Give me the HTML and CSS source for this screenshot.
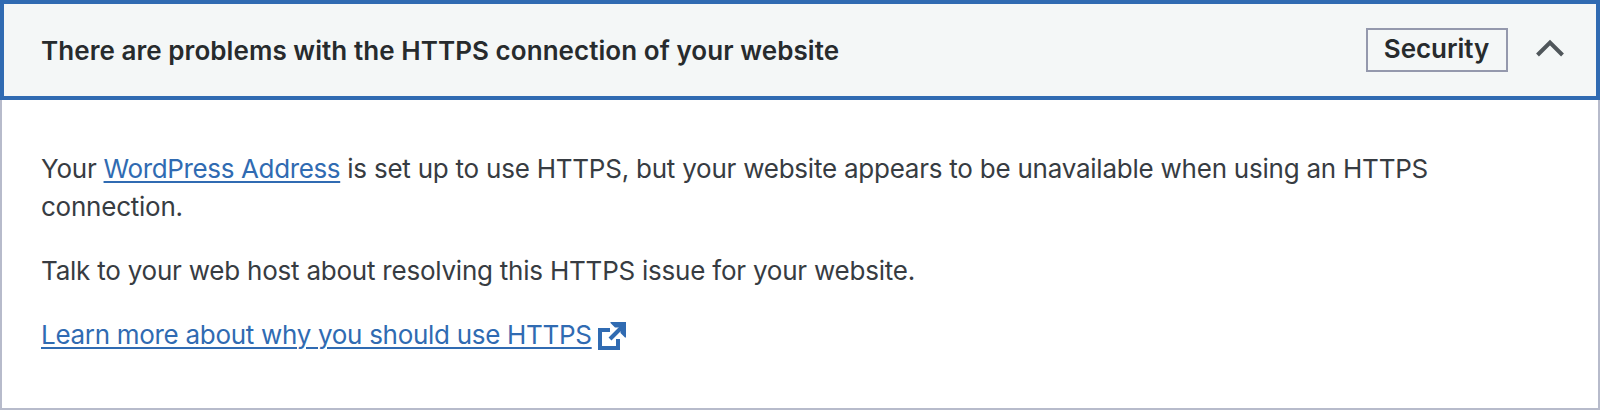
FILE: index.html
```html
<!DOCTYPE html>
<html lang="en">
<head>
<meta charset="utf-8">
<title>Site Health</title>
<link rel="stylesheet" href="styles.css">
</head>
<body>
<section class="accordion">
  <header class="trigger">
    <h4 class="title">There are problems with the HTTPS connection of your website</h4>
    <span class="badge">Security</span>
    <svg class="chevron" width="28" height="18" viewBox="0 0 28 18"><path d="M1.500 16 14 3.500 26.500 16"/></svg>
  </header>
  <div class="panel">
    <p class="intro">Your <a href="#">WordPress Address</a> is set up to use HTTPS, but your website appears to be unavailable when using an HTTPS<br>connection.</p>
    <p class="advice">Talk to your web host about resolving this HTTPS issue for your website.</p>
    <p class="more"><a href="#">Learn more about why you should use HTTPS</a><svg class="external" width="28" height="28" viewBox="0 0 28 28"><path class="frame" d="M12 8H2v18h18V17"/><path class="shaft" d="M12 17 24 5"/><path class="head" d="M12.500 0H28v15.500h-1L22.500 11V6.500L21.500 5.500H17L12.500 1z"/></svg></p>
  </div>
</section>
</body>
</html>
```
FILE: styles.css
```css
* { box-sizing: border-box; }
body {
  margin: 0;
  background: #fff;
  color: #373c42;
  font: 26px/38px Inter, "Liberation Sans", sans-serif;
}
.accordion {
  display: flex;
  flex-direction: column;
  height: 410px;
}
.trigger {
  display: flex;
  align-items: center;
  height: 100px;
  padding: 0 32px 0 37px;
  border: 4px solid #306bb2;
  background: #f4f7f7;
}
.title {
  flex: 1;
  margin: 2px 0 0;
  color: #272b2d;
  font-size: 26px;
  font-weight: 600;
  letter-spacing: 0.06px;
  white-space: nowrap;
}
.badge {
  width: 142px;
  height: 44px;
  padding-right: 1px;
  border: 2px solid #9499ad;
  color: #272b2d;
  font-weight: 600;
  letter-spacing: -0.05px;
  line-height: 38px;
  text-align: center;
}
.chevron {
  margin: -4px 0 0 28px;
  fill: none;
  stroke: #50575b;
  stroke-width: 4;
}
.panel {
  flex: 1;
  padding: 50px 39px 0;
  border: 2px solid #b7bbcb;
  border-top: 0;
}
p { margin: 0 0 26px; white-space: nowrap; }
a {
  color: #306bb2;
  text-decoration-thickness: 2px;
  text-underline-offset: 3px;
}
.intro { letter-spacing: -0.235px; }
.intro a { letter-spacing: -0.36px; }
.advice { letter-spacing: -0.227px; }
.more { display: flex; align-items: center; letter-spacing: -0.3px; }
.external { margin: 2px 0 0 6px; fill: none; stroke: #306bb2; }
.frame, .shaft { stroke-width: 4; }
.head { fill: #306bb2; stroke: none; }
```
